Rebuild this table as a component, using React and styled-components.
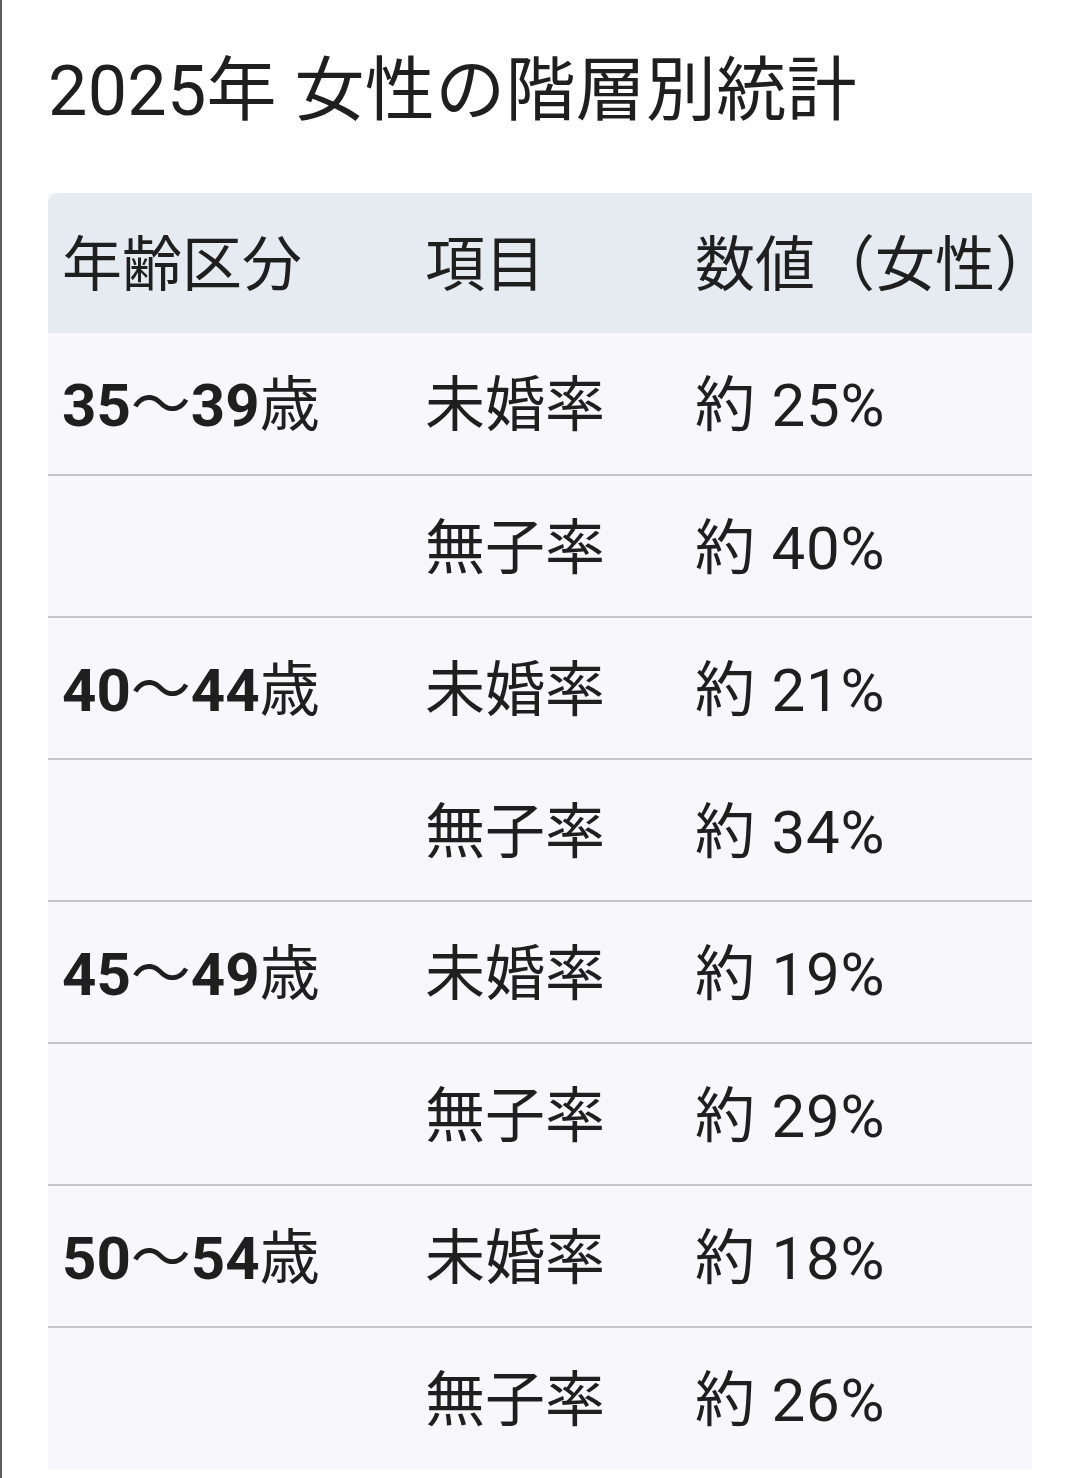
import styled, { createGlobalStyle } from "styled-components";

const GlobalStyle = createGlobalStyle`
  html, body {
    margin: 0;
    padding: 0;
    background: #ffffff;
  }
  body {
    font-family: Roboto, "Noto Sans CJK JP", sans-serif;
    color: #1f1f1f;
  }
`;

const rows = [
  { age: ["35", "39"], label: "未婚率", value: "約 25%" },
  { label: "無子率", value: "約 40%" },
  { age: ["40", "44"], label: "未婚率", value: "約 21%" },
  { label: "無子率", value: "約 34%" },
  { age: ["45", "49"], label: "未婚率", value: "約 19%" },
  { label: "無子率", value: "約 29%" },
  { age: ["50", "54"], label: "未婚率", value: "約 18%" },
  { label: "無子率", value: "約 26%" },
];

const App = () => {
  return (
    <>
      <GlobalStyle />
      <Page>
        <Title>2025年 女性の階層別統計</Title>
        <Table>
          <thead>
            <tr>
              <HeadCell>年齢区分</HeadCell>
              <HeadCell>項目</HeadCell>
              <HeadCell>数値（女性）</HeadCell>
            </tr>
          </thead>
          <tbody>
            {rows.map((row, i) => (
              <Row key={i} $first={i === 0}>
                <Cell>
                  {row.age && (
                    <>
                      <Num>{row.age[0]}</Num>〜<Num>{row.age[1]}</Num>歳
                    </>
                  )}
                </Cell>
                <Cell>{row.label}</Cell>
                <Cell $value>{row.value}</Cell>
              </Row>
            ))}
          </tbody>
        </Table>
      </Page>
    </>
  );
};

export default App;

const Page = styled.div`
  min-height: 1478px;
  box-sizing: border-box;
  border-left: 2px solid #5f5f5f;
  padding: 48px 0 0 46px;
`;

const Title = styled.h1`
  margin: 0 0 59px;
  font-size: 70px;
  font-weight: 400;
  line-height: 86px;
  letter-spacing: 0.3px;
  color: #1f1f1f;
`;

const Table = styled.table`
  width: 984px;
  border-collapse: collapse;
  table-layout: fixed;
  background: #f8f8fc;
`;

const HeadCell = styled.th`
  box-sizing: border-box;
  height: 140px;
  padding: 0 0 8px 14px;
  text-align: left;
  vertical-align: middle;
  font-size: 60px;
  font-weight: 400;
  background: #e6ebf2;
  white-space: nowrap;

  &:nth-child(1) {
    width: 363px;
    border-top-left-radius: 10px;
  }
  &:nth-child(2) {
    width: 270px;
  }
`;

const Row = styled.tr`
  border-top: ${(p) => (p.$first ? "none" : "2px solid #c6c7cd")};
`;

const Cell = styled.td`
  box-sizing: border-box;
  height: 142px;
  padding: 0 0 8px 14px;
  vertical-align: middle;
  font-size: 60px;
  font-weight: 400;
  white-space: nowrap;
  letter-spacing: ${(p) => (p.$value ? "0.8px" : "0")};
`;

const Num = styled.span`
  font-weight: 700;
`;
